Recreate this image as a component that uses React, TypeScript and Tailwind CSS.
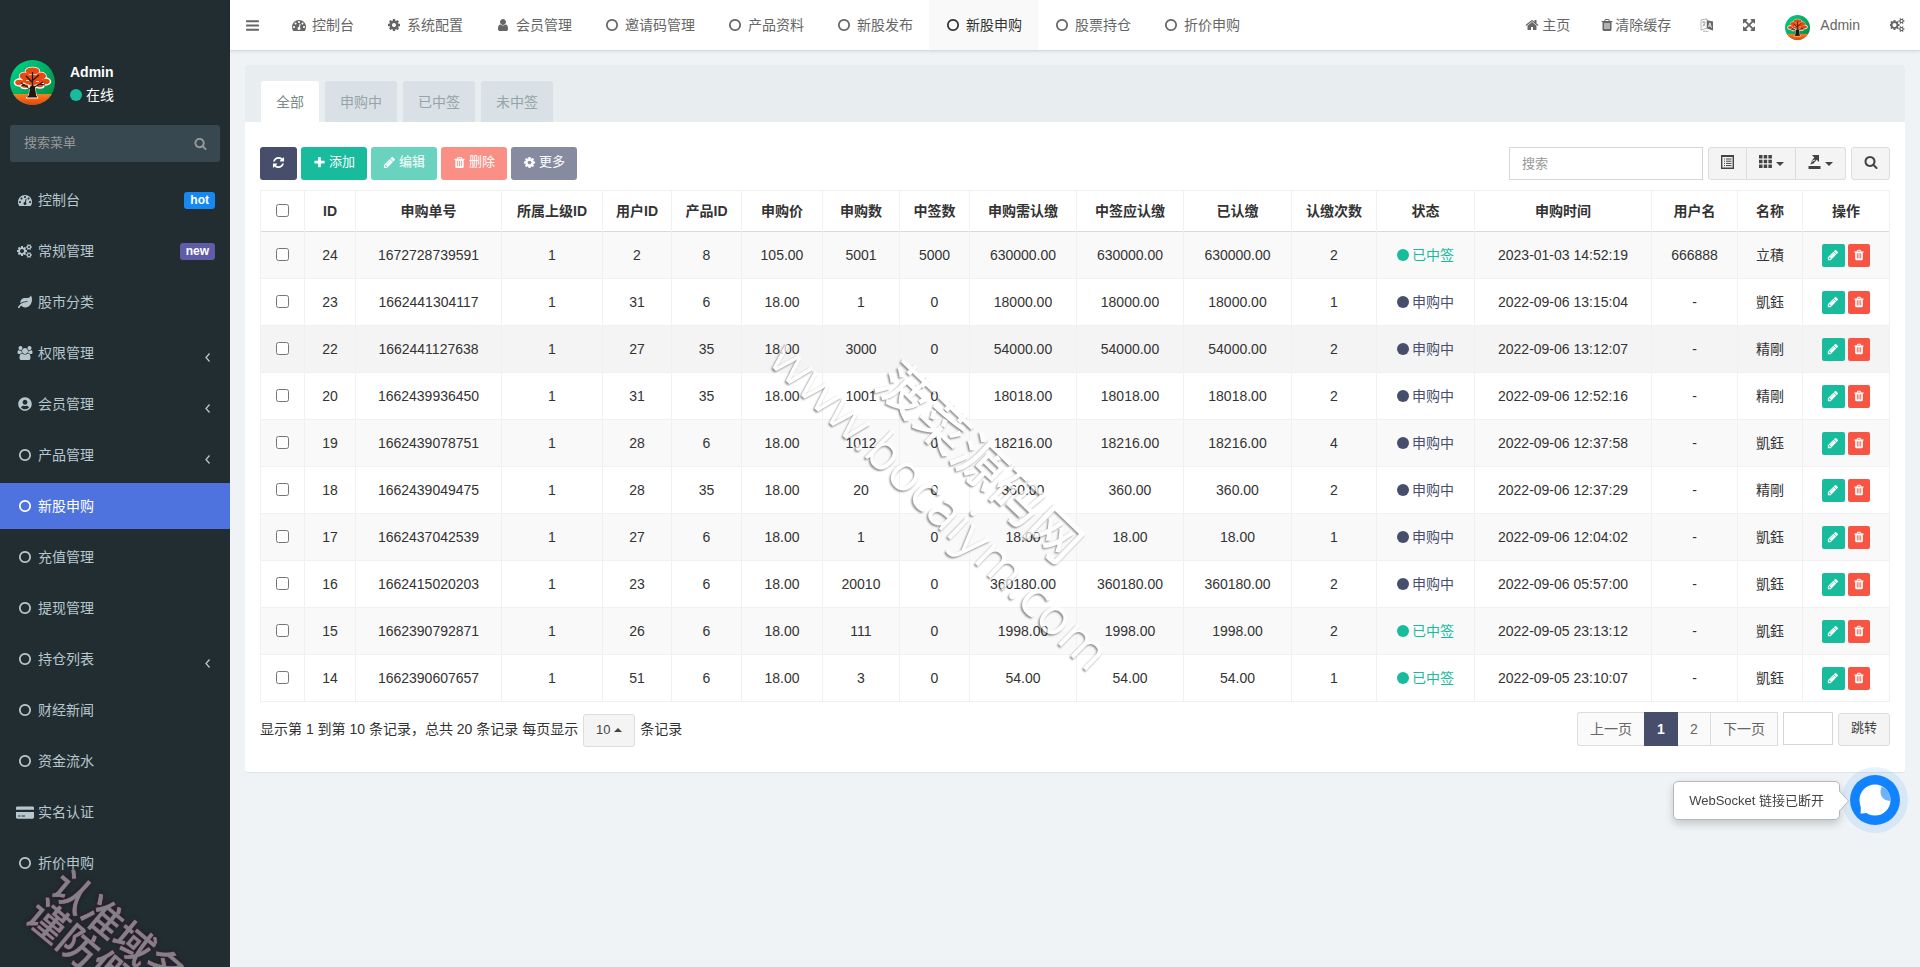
import type { ReactNode } from 'react';
import { clsx } from 'clsx';
import { FaLeaf, FaUserCircle } from 'react-icons/fa';

const glyphs = {
  dashboard:
    'M384 1152q0-53-37.5-90.5t-90.5-37.5-90.5 37.5-37.5 90.5 37.5 90.5 90.5 37.5 90.5-37.5 37.5-90.5zm192-448q0-53-37.5-90.5t-90.5-37.5-90.5 37.5-37.5 90.5 37.5 90.5 90.5 37.5 90.5-37.5 37.5-90.5zm428 481l101-382q6-26-7.5-48.5t-38.5-29.5-48 6.5-30 39.5l-101 382q-60 5-107 43.5t-63 98.5q-20 77 20 146t117 89 146-20 89-117q16-60-6-117t-72-91zm660-33q0-53-37.5-90.5t-90.5-37.5-90.5 37.5-37.5 90.5 37.5 90.5 90.5 37.5 90.5-37.5 37.5-90.5zm-640-640q0-53-37.5-90.5t-90.5-37.5-90.5 37.5-37.5 90.5 37.5 90.5 90.5 37.5 90.5-37.5 37.5-90.5zm448 192q0-53-37.5-90.5t-90.5-37.5-90.5 37.5-37.5 90.5 37.5 90.5 90.5 37.5 90.5-37.5 37.5-90.5zm320 448q0 261-141 483-19 29-54 29h-1402q-35 0-54-29-141-221-141-483 0-182 71-348t191-286 286-191 348-71 348 71 286 191 191 286 71 348z',
  cog: 'M1152 896q0-106-75-181t-181-75-181 75-75 181 75 181 181 75 181-75 75-181zm512-109v222q0 12-8 23t-20 13l-185 28q-19 54-39 91 35 50 107 138 10 12 10 25t-9 23q-27 37-99 108t-94 71q-12 0-26-9l-138-108q-44 23-91 38-16 136-29 186-7 28-36 28h-222q-14 0-24.5-8.5t-11.5-21.5l-28-184q-49-16-90-37l-141 107q-10 9-25 9-14 0-25-11-126-114-165-168-7-10-7-23 0-12 8-23 15-21 51-66.5t54-70.5q-27-50-41-99l-183-27q-13-2-21-12.5t-8-23.5v-222q0-12 8-23t19-13l186-28q14-46 39-92-40-57-107-138-10-12-10-24 0-10 9-23 26-36 98.5-107.5t94.5-71.5q13 0 26 10l138 107q44-23 91-38 16-136 29-186 7-28 36-28h222q14 0 24.5 8.5t11.5 21.5l28 184q49 16 90 37l142-107q9-9 24-9 13 0 25 10 129 119 165 170 7 8 7 22 0 12-8 23-15 21-51 66.5t-54 70.5q26 50 41 98l183 28q13 2 21 12.5t8 23.5z',
  cogs: 'M832 896q0-106-75-181t-181-75-181 75-75 181 75 181 181 75 181-75 75-181zm768 512q0-52-38-90t-90-38-90 38-38 90q0 53 37.5 90.5t90.5 37.5 90.5-37.5 37.5-90.5zm0-1024q0-52-38-90t-90-38-90 38-38 90q0 53 37.5 90.5t90.5 37.5 90.5-37.5 37.5-90.5zm-384 421v185q0 10-7 19.5t-16 10.5l-155 24q-11 35-32 76 34 48 90 115 7 11 7 20 0 12-7 19-23 30-82.5 89.5t-78.5 59.5q-11 0-21-7l-115-90q-37 19-77 31-11 108-23 155-7 24-30 24h-186q-11 0-20-7.5t-10-17.5l-23-153q-34-10-75-31l-118 89q-7 7-20 7-11 0-21-8-144-133-144-160 0-9 7-19 10-14 41-53t47-61q-23-44-35-82l-152-24q-10-1-17-9.5t-7-19.5v-185q0-10 7-19.5t16-10.5l155-24q11-35 32-76-34-48-90-115-7-11-7-20 0-12 7-20 22-30 82-89t79-59q11 0 21 7l115 90q34-18 77-32 11-108 23-154 7-24 30-24h186q11 0 20 7.5t10 17.5l23 153q34 10 75 31l118-89q8-7 20-7 11 0 21 8 144 133 144 160 0 8-7 19-12 16-42 54t-45 60q23 48 34 82l152 23q10 2 17 10.5t7 19.5zm640 533v140q0 16-149 31-12 27-30 52 51 113 51 138 0 4-4 7-122 71-124 71-8 0-46-47t-52-68q-20 2-30 2t-30-2q-14 21-52 68t-46 47q-2 0-124-71-4-3-4-7 0-25 51-138-18-25-30-52-149-15-149-31v-140q0-16 149-31 13-29 30-52-51-113-51-138 0-4 4-7 4-2 35-20t59-34 30-16q8 0 46 46.5t52 67.5q20-2 30-2t30 2q51-71 92-112l6-2q4 0 124 70 4 3 4 7 0 25-51 138 17 23 30 52 149 15 149 31zm0-1024v140q0 16-149 31-12 27-30 52 51 113 51 138 0 4-4 7-122 71-124 71-8 0-46-47t-52-68q-20 2-30 2t-30-2q-14 21-52 68t-46 47q-2 0-124-71-4-3-4-7 0-25 51-138-18-25-30-52-149-15-149-31v-140q0-16 149-31 13-29 30-52-51-113-51-138 0-4 4-7 4-2 35-20t59-34 30-16q8 0 46 46.5t52 67.5q20-2 30-2t30 2q51-71 92-112l6-2q4 0 124 70 4 3 4 7 0 25-51 138 17 23 30 52 149 15 149 31z',
  user: 'M1536 1399q0 109-62.5 187t-150.5 78h-854q-88 0-150.5-78t-62.5-187q0-85 8.5-160.5t31.5-152 58.5-131 94-89 134.5-34.5q131 128 313 128t313-128q76 0 134.5 34.5t94 89 58.5 131 31.5 152 8.5 160.5zm-256-887q0 159-112.5 271.5t-271.5 112.5-271.5-112.5-112.5-271.5 112.5-271.5 271.5-112.5 271.5 112.5 112.5 271.5z',
  group:
    'M593 896q-162 5-265 128h-134q-82 0-138-40.5t-56-118.5q0-353 124-353 6 0 43.5 21t97.5 42.5 119 21.5q67 0 133-23-5 37-5 66 0 139 81 256zm1071 637q0 120-73 189.5t-194 69.5h-874q-121 0-194-69.5t-73-189.5q0-53 3.5-103.5t14-109 26.5-108.5 43-97.5 62-81 85.5-53.5 111.5-20q10 0 43 21.5t73 48 107 48 135 21.5 135-21.5 107-48 73-48 43-21.5q61 0 111.5 20t85.5 53.5 62 81 43 97.5 26.5 108.5 14 109 3.5 103.5zm-1024-1277q0 106-75 181t-181 75-181-75-75-181 75-181 181-75 181 75 75 181zm704 384q0 159-112.5 271.5t-271.5 112.5-271.5-112.5-112.5-271.5 112.5-271.5 271.5-112.5 271.5 112.5 112.5 271.5zm576 225q0 78-56 118.5t-138 40.5h-134q-103-123-265-128 81-117 81-256 0-29-5-66 66 23 133 23 59 0 119-21.5t97.5-42.5 43.5-21q124 0 124 353zm-128-609q0 106-75 181t-181 75-181-75-75-181 75-181 181-75 181 75 75 181z',
  circle:
    'M896 352q-148 0-273 73t-198 198-73 273 73 273 198 198 273 73 273-73 198-198 73-273-73-273-198-198-273-73zm768 544q0 209-103 385.5t-279.5 279.5-385.5 103-385.5-103-279.5-279.5-103-385.5 103-385.5 279.5-279.5 385.5-103 385.5 103 279.5 279.5 103 385.5z',
  pencil:
    'M491 1536l91-91-235-235-91 91v107h128v128h107zm523-928q0-22-22-22-10 0-17 7l-542 542q-7 7-7 17 0 22 22 22 10 0 17-7l542-542q7-7 7-17zm-54-192l416 416-832 832h-416v-416zm683 96q0 53-37 90l-166 166-416-416 166-165q36-38 90-38 53 0 91 38l235 234q37 39 37 91z',
  trash:
    'M704 1376v-704q0-14-9-23t-23-9h-64q-14 0-23 9t-9 23v704q0 14 9 23t23 9h64q14 0 23-9t9-23zm256 0v-704q0-14-9-23t-23-9h-64q-14 0-23 9t-9 23v704q0 14 9 23t23 9h64q14 0 23-9t9-23zm256 0v-704q0-14-9-23t-23-9h-64q-14 0-23 9t-9 23v704q0 14 9 23t23 9h64q14 0 23-9t9-23zm-544-992h448l-48-117q-7-9-17-11h-317q-10 2-17 11zm928 32v64q0 14-9 23t-23 9h-96v948q0 83-47 143.5t-113 60.5h-832q-66 0-113-58.5t-47-141.5v-952h-96q-14 0-23-9t-9-23v-64q0-14 9-23t23-9h309l70-167q15-37 54-63t79-26h320q40 0 79 26t54 63l70 167h309q14 0 23 9t9 23z',
  refresh:
    'M1639 1056q0 5-1 7-64 268-268 434.5t-478 166.5q-146 0-282.5-55t-243.5-157l-129 129q-19 19-45 19t-45-19-19-45v-448q0-26 19-45t45-19h448q26 0 45 19t19 45-19 45l-137 137q71 66 161 102t187 36q134 0 250-65t186-179q11-17 53-117 8-23 30-23h192q13 0 22.5 9.5t9.5 22.5zm25-800v448q0 26-19 45t-45 19h-448q-26 0-45-19t-19-45 19-45l138-138q-148-137-349-137-134 0-250 65t-186 179q-11 17-53 117-8 23-30 23h-199q-13 0-22.5-9.5t-9.5-22.5v-7q65-268 270-434.5t480-166.5q146 0 284 55.5t245 156.5l130-129q19-19 45-19t45 19 19 45z',
  home: 'M1472 992v480q0 26-19 45t-45 19h-384v-384h-256v384h-384q-26 0-45-19t-19-45v-480q0-1 .5-3t.5-3l575-474 575 474q1 2 1 6zm223-69l-62 74q-8 9-21 11h-3q-13 0-21-7l-692-577-692 577q-12 8-24 7-13-2-21-11l-62-74q-8-10-7-23.5t11-21.5l719-599q32-26 76-26t76 26l244 204v-195q0-14 9-23t23-9h192q14 0 23 9t9 23v408l219 182q10 8 11 21.5t-7 23.5z',
  expand:
    'M1411 541l-355 355 355 355 144-144q29-31 70-14 39 17 39 59v448q0 26-19 45t-45 19h-448q-42 0-59-40-17-39 14-69l144-144-355-355-355 355 144 144q31 30 14 69-17 40-59 40h-448q-26 0-45-19t-19-45v-448q0-42 40-59 39-17 69 14l144 144 355-355-355-355-144 144q-19 19-45 19-12 0-24-5-40-17-40-59v-448q0-26 19-45t45-19h448q42 0 59 40 17 39-14 69l-144 144 355 355 355-355-144-144q-31-30-14-69 17-40 59-40h448q26 0 45 19t19 45v448q0 42-39 59-13 5-25 5-26 0-45-19z',
  search:
    'M1216 832q0-185-131.5-316.5t-316.5-131.5-316.5 131.5-131.5 316.5 131.5 316.5 316.5 131.5 316.5-131.5 131.5-316.5zm512 832q0 52-38 90t-90 38q-54 0-90-38l-343-342q-179 124-399 124-143 0-273.5-55.5t-225-150-150-225-55.5-273.5 55.5-273.5 150-225 225-150 273.5-55.5 273.5 55.5 225 150 150 225 55.5 273.5q0 220-124 399l343 343q37 37 37 90z',
  plus: 'M1600 736v192q0 40-28 68t-68 28h-416v416q0 40-28 68t-68 28h-192q-40 0-68-28t-28-68v-416h-416q-40 0-68-28t-28-68v-192q0-40 28-68t68-28h416v-416q0-40 28-68t68-28h192q40 0 68 28t28 68v416h416q40 0 68 28t28 68z',
  bars: 'M1664 1344v128q0 26-19 45t-45 19h-1408q-26 0-45-19t-19-45v-128q0-26 19-45t45-19h1408q26 0 45 19t19 45zm0-512v128q0 26-19 45t-45 19h-1408q-26 0-45-19t-19-45v-128q0-26 19-45t45-19h1408q26 0 45 19t19 45zm0-512v128q0 26-19 45t-45 19h-1408q-26 0-45-19t-19-45v-128q0-26 19-45t45-19h1408q26 0 45 19t19 45z',
  card: 'M0 1504v-608h2048v608q0 66-47 113t-113 47h-1728q-66 0-113-47t-47-113zm640-224v128h384v-128h-384zm-384 0v128h256v-128h-256zm1632-1024q66 0 113 47t47 113v224h-2048v-224q0-66 47-113t113-47h1728z',
};

type IconName = keyof typeof glyphs;

function Icon({ name, className = 'size-3.5' }: { name: IconName; className?: string }) {
  const wide = name === 'cogs' || name === 'group' ? 1920 : name === 'card' ? 2048 : 1792;

  return (
    <svg
      viewBox={`0 0 ${wide} 1792`}
      fill="currentColor"
      fillRule="evenodd"
      aria-hidden="true"
      className={clsx('shrink-0', className)}
    >
      <path d={glyphs[name]} />
    </svg>
  );
}

function LanguageIcon() {
  return (
    <svg viewBox="0 0 14 14" fill="none" stroke="currentColor" aria-hidden="true" className="size-3.5">
      <path d="M1 2 7 .8v9.4L1 12z" strokeWidth=".7" opacity=".7" />
      <path d="M2.3 4.2h3M3.8 3v1.2M2.4 8.4c1.6-.6 2.3-2 2.5-4M2.8 5.6l2.4 2.2" strokeWidth=".7" opacity=".8" />
      <path d="M7 2.3 13 3.6v8.8L7 10.6z" fill="currentColor" stroke="none" />
      <path d="m8.5 9 1.4-4.2L11.500 9.800M9 7.700l2 .5" stroke="#fff" strokeWidth=".8" />
      <path d="M3 13.300h5.500" strokeWidth=".8" opacity=".6" />
    </svg>
  );
}

function Caret({ up }: { up?: boolean }) {
  return (
    <svg viewBox="0 0 8 4" fill="currentColor" aria-hidden="true" className="h-1 w-2">
      <path d={up ? 'M0 4h8L4 0z' : 'M0 0h8L4 4z'} />
    </svg>
  );
}

function Avatar({ className }: { className: string }) {
  return (
    <svg viewBox="0 0 45 45" role="img" aria-label="Admin" className={clsx('shrink-0 rounded-full', className)}>
      <defs>
        <linearGradient id="sky" x1="0" y1="0" x2="1" y2="1">
          <stop offset="0" stopColor="#00d68a" />
          <stop offset="1" stopColor="#05823c" />
        </linearGradient>
        <linearGradient id="ground" x1="0" y1="0" x2="0" y2="1">
          <stop offset="0" stopColor="#f58220" />
          <stop offset="1" stopColor="#e8430c" />
        </linearGradient>
      </defs>
      <rect width="45" height="45" fill="url(#sky)" />
      <rect y="34" width="45" height="11" fill="url(#ground)" />
      <g fill="#e8490f" stroke="#fff" strokeWidth="1.500">
        <ellipse cx="22.500" cy="11" rx="7" ry="3.500" />
        <ellipse cx="14.500" cy="16" rx="5" ry="3.500" />
        <ellipse cx="31" cy="16" rx="5" ry="3.500" />
        <ellipse cx="9.500" cy="22.500" rx="5" ry="3.500" />
        <ellipse cx="35.500" cy="21.500" rx="5" ry="3.500" />
        <ellipse cx="15" cy="26" rx="4" ry="2.500" />
        <ellipse cx="30" cy="25.500" rx="4" ry="2.500" />
        <path d="M20 25h5l1 10 2 3H16l3-3z" fill="#26150d" strokeWidth="1" />
      </g>
      <g fill="#e8490f">
        <ellipse cx="22.500" cy="11" rx="7" ry="3.500" />
        <ellipse cx="14.500" cy="16" rx="5" ry="3.500" />
        <ellipse cx="31" cy="16" rx="5" ry="3.500" />
        <ellipse cx="22.500" cy="20" rx="10" ry="5" />
      </g>
      <path
        d="M22.500 37V12M22 30 11 23M23 28l10-6M22 22l-6-6M23 20l6-5M15 25l-4 1M30 24l5 1"
        stroke="#26150d"
        strokeWidth="1.200"
        fill="none"
      />
      <path d="M16 20.500h3M26 21.500h3M18 27l2 1M27 27l-2 1" stroke="#fff" strokeWidth=".8" />
      <path d="M20 27h5l1 8 1 2H17l2-2z" fill="#26150d" />
    </svg>
  );
}

type MenuItem = {
  label: string;
  icon: ReactNode;
  badge?: { text: string; color: string };
  arrow?: boolean;
  active?: boolean;
};

const circle = <Icon name="circle" />;

const menu: MenuItem[] = [
  { label: '控制台', icon: <Icon name="dashboard" />, badge: { text: 'hot', color: 'bg-[#1688f1]' } },
  { label: '常规管理', icon: <Icon name="cogs" className="h-3.5 w-4" />, badge: { text: 'new', color: 'bg-[#605ca8]' } },
  { label: '股市分类', icon: <FaLeaf className="size-3.5" /> },
  { label: '权限管理', icon: <Icon name="group" className="h-3.5 w-4" />, arrow: true },
  { label: '会员管理', icon: <FaUserCircle className="size-3.5" />, arrow: true },
  { label: '产品管理', icon: circle, arrow: true },
  { label: '新股申购', icon: circle, active: true },
  { label: '充值管理', icon: circle },
  { label: '提现管理', icon: circle },
  { label: '持仓列表', icon: circle, arrow: true },
  { label: '财经新闻', icon: circle },
  { label: '资金流水', icon: circle },
  { label: '实名认证', icon: <Icon name="card" className="h-4 w-[18px]" /> },
  { label: '折价申购', icon: circle },
];

const navTabs: { label: string; icon: IconName; active?: boolean }[] = [
  { label: '控制台', icon: 'dashboard' },
  { label: '系统配置', icon: 'cog' },
  { label: '会员管理', icon: 'user' },
  { label: '邀请码管理', icon: 'circle' },
  { label: '产品资料', icon: 'circle' },
  { label: '新股发布', icon: 'circle' },
  { label: '新股申购', icon: 'circle', active: true },
  { label: '股票持仓', icon: 'circle' },
  { label: '折价申购', icon: 'circle' },
];

const columns = [
  { title: 'ID', width: 51 },
  { title: '申购单号', width: 146 },
  { title: '所属上级ID', width: 101 },
  { title: '用户ID', width: 69 },
  { title: '产品ID', width: 70 },
  { title: '申购价', width: 81 },
  { title: '申购数', width: 77 },
  { title: '中签数', width: 70 },
  { title: '申购需认缴', width: 107 },
  { title: '中签应认缴', width: 107 },
  { title: '已认缴', width: 108 },
  { title: '认缴次数', width: 85 },
  { title: '状态', width: 98 },
  { title: '申购时间', width: 177 },
  { title: '用户名', width: 86 },
  { title: '名称', width: 65 },
  { title: '操作', width: 87 },
];

// id, order, parent, user, product, price, count, won, amount, times, won?, time, username, name
type Row = [string, string, string, string, string, string, string, string, string, string, boolean, string, string, string];

const rows: Row[] = [
  ['24', '1672728739591', '1', '2', '8', '105.00', '5001', '5000', '630000.00', '2', true, '2023-01-03 14:52:19', '666888', '立積'],
  ['23', '1662441304117', '1', '31', '6', '18.00', '1', '0', '18000.00', '1', false, '2022-09-06 13:15:04', '-', '凱鈺'],
  ['22', '1662441127638', '1', '27', '35', '18.00', '3000', '0', '54000.00', '2', false, '2022-09-06 13:12:07', '-', '精剛'],
  ['20', '1662439936450', '1', '31', '35', '18.00', '1001', '0', '18018.00', '2', false, '2022-09-06 12:52:16', '-', '精剛'],
  ['19', '1662439078751', '1', '28', '6', '18.00', '1012', '0', '18216.00', '4', false, '2022-09-06 12:37:58', '-', '凱鈺'],
  ['18', '1662439049475', '1', '28', '35', '18.00', '20', '0', '360.00', '2', false, '2022-09-06 12:37:29', '-', '精剛'],
  ['17', '1662437042539', '1', '27', '6', '18.00', '1', '0', '18.00', '1', false, '2022-09-06 12:04:02', '-', '凱鈺'],
  ['16', '1662415020203', '1', '23', '6', '18.00', '20010', '0', '360180.00', '2', false, '2022-09-06 05:57:00', '-', '凱鈺'],
  ['15', '1662390792871', '1', '26', '6', '18.00', '111', '0', '1998.00', '2', true, '2022-09-05 23:13:12', '-', '凱鈺'],
  ['14', '1662390607657', '1', '51', '6', '18.00', '3', '0', '54.00', '1', true, '2022-09-05 23:10:07', '-', '凱鈺'],
];

function Sidebar() {
  return (
    <aside className="w-[230px] shrink-0 bg-[#222d32] pt-[60px] text-[#b8c7ce]">
      <div className="flex gap-[15px] px-2.5 text-white">
        <Avatar className="size-[45px]" />
        <div className="flex flex-col gap-[3px]">
          <p className="font-bold leading-6">Admin</p>
          <a href="#" className="flex items-center gap-1 leading-4">
            <span className="size-3 rounded-full bg-[#18bc9c]" />
            在线
          </a>
        </div>
      </div>

      <form className="mx-2.5 mt-5 flex h-[37px] items-center rounded-[3px] bg-[#374850] pr-[13px] text-[#999]">
        <input
          type="text"
          aria-label="搜索菜单"
          placeholder="搜索菜单"
          className="min-w-0 flex-1 pl-3.5 text-[13px] outline-none placeholder:text-[#999]"
        />
        <button type="button" aria-label="搜索">
          <Icon name="search" className="size-[13px]" />
        </button>
      </form>

      <nav className="mt-[15px] flex flex-col gap-[5px]">
        {menu.map((item) => (
          <a
            key={item.label}
            href="#"
            className={clsx(
              'flex h-[46px] items-center gap-1 pr-[15px] pl-4',
              item.active && 'bg-[#4e73df] text-white',
            )}
          >
            <span className="flex w-[18px] justify-center">{item.icon}</span>
            <span className="flex-1">{item.label}</span>
            {item.badge && (
              <span className={clsx('rounded-[3px] px-1.5 text-xs leading-[17px] font-bold text-white', item.badge.color)}>
                {item.badge.text}
              </span>
            )}
            {item.arrow && (
              <svg viewBox="0 0 5 9" fill="none" stroke="currentColor" className="mt-2 mr-[5px] h-[9px] w-[5px]">
                <path d="M4.500.5 1 4.500l3.500 4" strokeWidth="1.300" />
              </svg>
            )}
          </a>
        ))}
      </nav>
    </aside>
  );
}

function Header() {
  return (
    <header className="z-10 flex h-[51px] border-b border-[#d9dcde] bg-white text-[#666] shadow-[0_1px_3px_rgba(0,0,0,0.08)]">
      <button type="button" aria-label="菜单" className="w-[45px] pl-[15px]">
        <Icon name="bars" className="size-[15px]" />
      </button>
      <nav className="flex">
        {navTabs.map((tab) => (
          <a
            key={tab.label}
            href="#"
            className={clsx('flex items-center gap-1 pr-4 pl-[15px]', tab.active && 'bg-[#f9f9f9] text-[#333]')}
          >
            <span className="flex w-[18px] justify-center">
              <Icon name={tab.icon} />
            </span>
            {tab.label}
          </a>
        ))}
      </nav>
      <div className="ml-auto flex">
        <a href="#" className="flex items-center gap-[3px] px-[15px]">
          <Icon name="home" />
          主页
        </a>
        <a href="#" className="flex items-center gap-px px-[15px]">
          <Icon name="trash" />
          清除缓存
        </a>
        <button type="button" aria-label="语言" className="px-3.5">
          <LanguageIcon />
        </button>
        <button type="button" aria-label="全屏" className="px-3.5">
          <Icon name="expand" />
        </button>
        <a href="#" className="flex items-center gap-2.5 px-[15px]">
          <Avatar className="mt-1 size-[25px]" />
          Admin
        </a>
        <button type="button" aria-label="设置" className="px-[15px]">
          <Icon name="cogs" className="h-3.5 w-[15px]" />
        </button>
      </div>
    </header>
  );
}

function Toolbar() {
  const action = 'flex h-[33px] items-center gap-[3px] rounded-[3px] px-3 pb-[3px] text-[13px] text-white';
  const tool = 'flex h-[33px] items-center justify-center gap-1 border-[#ddd] bg-[#f4f4f4] pb-1 text-[#444]';

  return (
    <div className="flex justify-between">
      <div className="flex gap-1">
        <button type="button" aria-label="刷新" className={clsx(action, 'bg-[#474e6c]')}>
          <Icon name="refresh" className="size-[13px]" />
        </button>
        <button type="button" className={clsx(action, 'bg-[#18bc9c]')}>
          <Icon name="plus" className="size-[13px]" />
          添加
        </button>
        <button type="button" className={clsx(action, 'bg-[#69d3bf]')}>
          <Icon name="pencil" className="size-[13px]" />
          编辑
        </button>
        <button type="button" className={clsx(action, 'bg-[#fa8f85]')}>
          <Icon name="trash" className="size-[13px]" />
          删除
        </button>
        <button type="button" className={clsx(action, 'bg-[#868ba0]')}>
          <Icon name="cog" className="size-[13px]" />
          更多
        </button>
      </div>

      <div className="flex gap-[5px]">
        <input
          type="text"
          aria-label="搜索"
          placeholder="搜索"
          className="h-[33px] w-[194px] border border-[#d2d6de] px-3 text-[13px] outline-none placeholder:text-[#999]"
        />
        <div className="flex">
          <button type="button" aria-label="切换" className={clsx(tool, 'w-[39px] rounded-l-[3px] border')}>
            <svg viewBox="0 0 13 14" fill="none" stroke="currentColor" className="h-3.5 w-[13px]">
              <path d="M.7.7h11.600v12.600H.7zM.7 1.200h11.600" strokeWidth="1.400" />
              <path d="M3 4h1M5 4h5.500M3 6.200h1M5 6.200h5.500M3 8.400h1M5 8.400h5.500M3 10.600h1M5 10.600h5.500" />
            </svg>
          </button>
          <button type="button" aria-label="列" className={clsx(tool, 'w-[49px] border-y border-r')}>
            <svg viewBox="0 0 13 13" fill="currentColor" className="size-[13px]">
              <path d="M0 0h3.500v3.500H0zM4.700 0h3.500v3.500H4.700zM9.400 0h3.500v3.500H9.400zM0 4.700h3.500v3.500H0zM4.700 4.700h3.500v3.500H4.700zM9.400 4.700h3.500v3.500H9.400zM0 9.400h3.500v3.500H0zM4.700 9.400h3.500v3.500H4.700zM9.400 9.400h3.500v3.500H9.400z" />
            </svg>
            <span className="pt-1">
              <Caret />
            </span>
          </button>
          <button type="button" aria-label="导出" className={clsx(tool, 'w-[50px] rounded-r-[3px] border-y border-r')}>
            <svg viewBox="0 0 13 14" fill="currentColor" className="h-3.5 w-[13px]">
              <path d="M.5 11h12v3H.5zM4 0h7v7L8.700 4.800 5.500 8.500 2.500 9.500l1-3.500L6.300 2.500z" />
              <path d="M3 7.500C4 6 5.500 5.500 7 5" stroke="#f4f4f4" fill="none" />
            </svg>
            <span className="pt-1">
              <Caret />
            </span>
          </button>
        </div>
        <button type="button" aria-label="高级搜索" className={clsx(tool, 'w-[39px] rounded-[3px] border')}>
          <Icon name="search" />
        </button>
      </div>
    </div>
  );
}

function Status({ won }: { won: boolean }) {
  return (
    <span className={clsx('flex items-center justify-center gap-[3px]', won ? 'text-[#18bc9c]' : 'text-[#474e6c]')}>
      <span className="size-3 rounded-full bg-current" />
      {won ? '已中签' : '申购中'}
    </span>
  );
}

function OrderTable() {
  return (
    <table className="mt-2.5 w-full table-fixed border-collapse text-center">
      <colgroup>
        <col style={{ width: `${(44 / 1629) * 100}%` }} />
        {columns.map((column) => (
          <col key={column.title} style={{ width: `${(column.width / 1629) * 100}%` }} />
        ))}
      </colgroup>
      <thead>
        <tr className="h-[41px] border-b border-[#d9d9d9]">
          <th className="border-x border-t border-[#f1f1f1] pb-1">
            <input type="checkbox" aria-label="全选" className="size-[13px] align-middle" />
          </th>
          {columns.map((column) => (
            <th key={column.title} className="border-x border-t border-[#f1f1f1] font-bold whitespace-nowrap">
              {column.title}
            </th>
          ))}
        </tr>
      </thead>
      <tbody>
        {rows.map((row) => {
          const [id, order, parent, user, product, price, count, got, amount, times, won, time, username, name] = row;
          const before = [id, order, parent, user, product, price, count, got, amount, amount, amount, times];

          return (
            <tr
              key={id}
              className={clsx('h-[47px] border-b border-[#f1f1f1]', id === '22' ? 'bg-[#f4f4f4]' : 'odd:bg-[#f9f9f9]')}
            >
              <td className="border-x border-[#f1f1f1] pb-1">
                <input type="checkbox" aria-label={`选择 ${id}`} className="size-[13px] align-middle" />
              </td>
              {before.map((value, i) => (
                <td key={i} className="border-x border-[#f1f1f1]">
                  {value}
                </td>
              ))}
              <td className="border-x border-[#f1f1f1]">
                <Status won={won} />
              </td>
              <td className="border-x border-[#f1f1f1]">{time}</td>
              <td className="border-x border-[#f1f1f1]">{username}</td>
              <td className="border-x border-[#f1f1f1]">{name}</td>
              <td className="border-x border-[#f1f1f1]">
                <div className="flex justify-center gap-[3px] text-white">
                  <button
                    type="button"
                    aria-label="编辑"
                    className="flex size-[23px] items-center justify-center rounded-[2px] bg-[#18bc9c]"
                  >
                    <Icon name="pencil" className="size-3" />
                  </button>
                  <button
                    type="button"
                    aria-label="删除"
                    className="flex h-[23px] w-[22px] items-center justify-center rounded-[2px] bg-[#f75444]"
                  >
                    <Icon name="trash" className="size-3" />
                  </button>
                </div>
              </td>
            </tr>
          );
        })}
      </tbody>
    </table>
  );
}

function Pagination() {
  const page = 'flex h-[34px] items-center border-[#ddd] bg-[#fafafa] text-[#666]';

  return (
    <div className="mt-2.5 flex justify-between">
      <div className="flex gap-[5px] pt-0.5 leading-[30px]">
        <span>显示第 1 到第 10 条记录，总共 20 条记录 每页显示</span>
        <button
          type="button"
          className="flex h-[33px] w-[52px] items-center justify-center gap-1 rounded-[3px] border border-[#ddd] bg-[#f4f4f4] pb-0.5 text-[13px] text-[#444]"
        >
          10
          <span className="pt-px">
            <Caret up />
          </span>
        </button>
        <span>条记录</span>
      </div>

      <div className="flex items-start gap-[5px]">
        <nav className="flex">
          <a href="#" className={clsx(page, 'rounded-l-[3px] border-y border-l px-3')}>
            上一页
          </a>
          <a href="#" className="flex h-[34px] w-[34px] items-center justify-center bg-[#474e6c] font-bold text-white">
            1
          </a>
          <a href="#" className={clsx(page, 'w-[33px] justify-center border-y border-r')}>
            2
          </a>
          <a href="#" className={clsx(page, 'border-y border-r px-3')}>
            下一页
          </a>
        </nav>
        <input type="text" aria-label="页码" className="h-[33px] w-[50px] border border-[#d2d6de] px-2 outline-none" />
        <button
          type="button"
          className="mt-px h-[33px] w-[52px] rounded-[3px] border border-[#ddd] bg-[#f4f4f4] pb-0.5 text-[13px] text-[#444]"
        >
          跳转
        </button>
      </div>
    </div>
  );
}

function ChatWidget() {
  return (
    <div className="fixed right-3 bottom-[134px] z-20 flex items-center">
      <div className="relative rounded-[5px] border border-[#b4b8bc] bg-white px-[15px] text-[13px] leading-[37px] text-[#444] shadow-[0_4px_8px_rgba(0,0,0,0.18)]">
        WebSocket 链接已断开
        <svg viewBox="0 0 10 20" className="absolute top-[9px] left-full h-5 w-2.5">
          <path d="M0 0 9.500 10 0 20z" fill="#fff" />
          <path d="M.5 0 9.500 10 .5 20" fill="none" stroke="#b4b8bc" />
        </svg>
      </div>
      <button type="button" aria-label="客服" className="ml-0.5 size-[66px] rounded-full bg-[#1183ff]/10 p-2">
        <svg viewBox="0 0 50 50" className="size-[50px]">
          <circle cx="25" cy="25" r="25" fill="#1183ff" />
          <circle cx="25" cy="25" r="15.500" fill="#fff" />
          <path d="M10 28c1 4 1 7 .5 10.500 3 0 5.500-.5 8-1.500z" fill="#fff" />
          <path d="M32 11.200A15.500 15.500 0 0 1 40.500 26c-6 0-10-4-10-9 0-2 .5-4 1.500-5.800z" fill="#6fb3ff" />
        </svg>
      </button>
    </div>
  );
}

function Watermarks() {
  return (
    <div className="pointer-events-none fixed inset-0 z-30 overflow-hidden whitespace-nowrap">
      <p className="absolute top-[330px] left-[798px] origin-top-left rotate-44 font-['Open_Sans',sans-serif] text-[51px] leading-[51px] font-medium text-white opacity-70 [text-shadow:0_2px_2px_rgba(0,0,0,0.6)]">
        www.bocaiym.com
      </p>
      <p className="absolute top-[354px] left-[904px] origin-top-left rotate-44 text-[52px] leading-[52px] font-medium text-white opacity-70 [text-shadow:0_2px_2px_rgba(0,0,0,0.6)]">
        菠菜源码网
      </p>
      <p className="absolute top-[865px] left-[69px] origin-top-left rotate-40 text-[40px] leading-[38px] font-medium text-[#7f8386] [text-shadow:0_0_1px_#b0307a,0_0_1px_#b0307a,0_0_5px_rgba(0,0,0,0.5)]">
        认准域名
        <br />
        谨防假冒
      </p>
    </div>
  );
}

const panelTabs = ['全部', '申购中', '已中签', '未中签'];

export default function App() {
  return (
    <div className="flex min-h-screen bg-[#eff3f6] font-['Liberation_Sans','Noto_Sans_CJK_SC',sans-serif] text-sm text-[#333]">
      <Sidebar />
      <div className="flex min-w-0 flex-1 flex-col">
        <Header />
        <main className="p-[15px] pt-3.5">
          <section className="rounded-[3px] border-b border-[#e0e4e6] bg-white">
            <div role="tablist" className="flex gap-1.5 rounded-t-[3px] bg-[#e8edf0] px-4 pt-4">
              {panelTabs.map((tab, i) => (
                <button
                  key={tab}
                  type="button"
                  role="tab"
                  aria-selected={i === 0}
                  className={clsx(
                    'h-[41px] rounded-t-[3px] px-[15px]',
                    i === 0 ? 'bg-white text-[#7b8a8b]' : 'bg-[#d9e0e6] text-[#95a5a6]',
                  )}
                >
                  {tab}
                </button>
              ))}
            </div>
            <div className="px-[15px] pt-[25px] pb-[25px]">
              <Toolbar />
              <OrderTable />
              <Pagination />
            </div>
          </section>
        </main>
      </div>
      <ChatWidget />
      <Watermarks />
    </div>
  );
}
